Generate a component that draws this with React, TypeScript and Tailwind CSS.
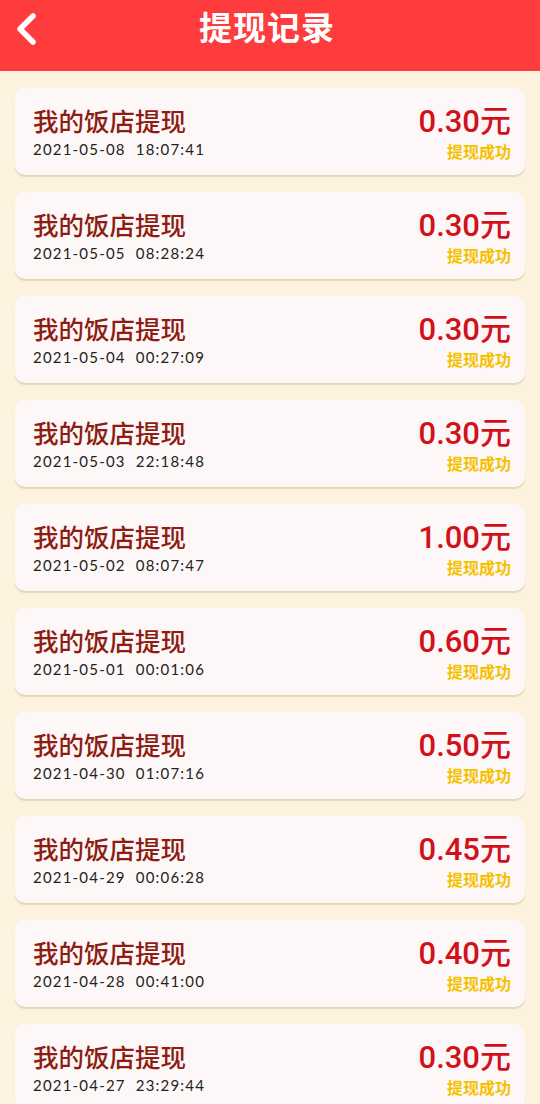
import React from "react";

const rows = [
  ["2021-05-08  18:07:41", "0.30"],
  ["2021-05-05  08:28:24", "0.30"],
  ["2021-05-04  00:27:09", "0.30"],
  ["2021-05-03  22:18:48", "0.30"],
  ["2021-05-02  08:07:47", "1.00"],
  ["2021-05-01  00:01:06", "0.60"],
  ["2021-04-30  01:07:16", "0.50"],
  ["2021-04-29  00:06:28", "0.45"],
  ["2021-04-28  00:41:00", "0.40"],
  ["2021-04-27  23:29:44", "0.30"],
];

export default function App() {
  return (
    <div className="w-[540px] h-[1104px] overflow-hidden bg-[#fdf2dd]" style={{ fontFamily: '"Noto Sans CJK SC", "Noto Sans", sans-serif' }}>
      <div className="h-[71px] bg-[#fe3b3d] relative flex items-center justify-center">
        <svg className="absolute left-[14px] top-[11px]" width="26" height="36" viewBox="0 0 26 36">
          <polyline points="19,5 6,18 19,31" fill="none" stroke="#fff" strokeWidth="5.5" strokeLinecap="round" strokeLinejoin="round" />
        </svg>
        <div className="text-white text-[33px] font-bold leading-none -mt-[18px] ml-[-6px] tracking-[1px]">提现记录</div>
      </div>
      <div className="flex flex-col gap-[17px] px-[15px] pt-[17px]">
        {rows.map(([d, a], i) => (
          <div key={i} className="h-[87px] shrink-0 rounded-[10px] bg-[#fdf8f7] shadow-[0_2px_1px_rgba(200,180,140,0.45)] flex items-center justify-between pl-[18px] pr-[14px]">
            <div className="flex flex-col">
              <div className="text-[25.5px] leading-[30px] font-medium text-[#8e1c12]">我的饭店提现</div>
              <div className="text-[15px] leading-[20px] mt-[4px] text-[#222] tracking-[1.2px] whitespace-pre" style={{ fontFamily: 'Lato, "Noto Sans", sans-serif' }}>{d}</div>
            </div>
            <div className="flex flex-col items-end">
              <div className="text-[31px] leading-[34px] font-medium text-[#d2111b] flex items-baseline" style={{ fontFamily: 'Roboto, "Noto Sans CJK SC", sans-serif' }}>
                {a}<span style={{ fontFamily: '"Noto Sans CJK SC", sans-serif' }}>元</span>
              </div>
              <div className="text-[16px] leading-[20px] mt-[2px] font-bold text-[#f5c000]">提现成功</div>
            </div>
          </div>
        ))}
      </div>
    </div>
  );
}
